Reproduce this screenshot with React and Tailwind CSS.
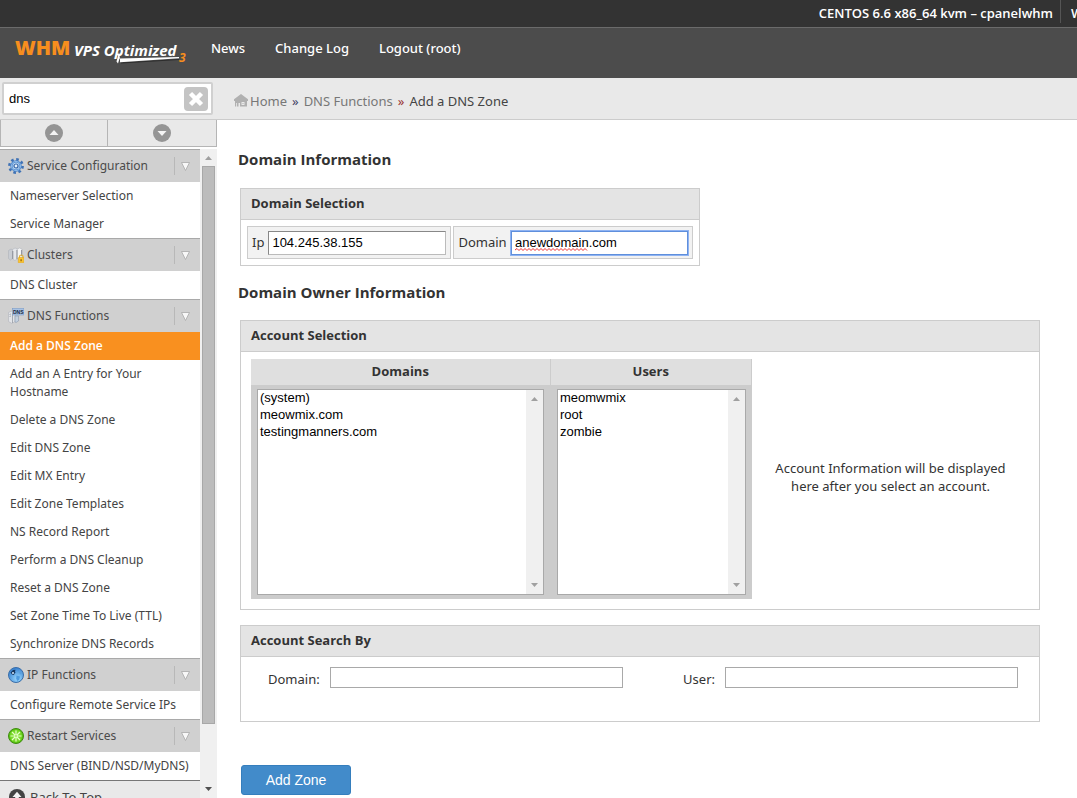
import React from "react";

const SANS = "font-['Noto_Sans','Open_Sans',sans-serif]";
const HEADING = "font-['Open_Sans','Noto_Sans',sans-serif] font-bold";

function GearIcon() {
  return (
    <svg viewBox="0 0 16 16" className="size-4 shrink-0" aria-hidden="true">
      <circle cx="8" cy="8" r="6.6" fill="none" stroke="#3f72b5" strokeWidth="2.6" strokeDasharray="2.600 2.580" />
      <circle cx="8" cy="8" r="4.600" fill="#b9d8f5" stroke="#4a83c8" strokeWidth="2.200" />
      <circle cx="8" cy="8" r="4.600" fill="none" stroke="#9cc6f0" strokeWidth=".8" />
      <circle cx="8" cy="8" r="2" fill="#e8f2fc" stroke="#3a68a8" strokeWidth="1.200" />
    </svg>
  );
}

function ClusterIcon() {
  return (
    <svg viewBox="0 0 16 16" className="size-4 shrink-0" aria-hidden="true">
      <path d="M.5 3.500 3 2l2 1v8l-2.500 2-2-1.500z" fill="#c9cdd3" stroke="#a8adb5" strokeWidth=".5" />
      <path d="M4.500 2.500 7 1l2.500 1v9.500L7 13.500 4.500 12z" fill="#e4e6ea" stroke="#a8adb5" strokeWidth=".5" />
      <path d="M9 2.500 11.500 1 14 2v9l-2.500 2L9 11.500z" fill="#f4f5f6" stroke="#a8adb5" strokeWidth=".5" />
      <path d="M4.800 4v8M9 3v9M13.600 3v6" stroke="#81868f" strokeWidth=".9" />
      <path d="M11.500 11V9.800a1.800 1.800 0 0 1 3.600 0V11" fill="none" stroke="#e0b23c" strokeWidth="1.200" />
      <rect x="10.300" y="10.500" width="5.500" height="5.300" rx=".6" fill="#fbc52f" stroke="#e0a51c" strokeWidth=".6" />
      <path d="M13.100 12.300v2" stroke="#8a5a0c" strokeWidth="1.200" />
    </svg>
  );
}

function DnsIcon() {
  return (
    <svg viewBox="0 0 16 16" className="size-4 shrink-0" aria-hidden="true">
      <path d="M.5 4.500 4 3l3 1v9.500L4 15.500.5 13.500z" fill="#e2e4e8" stroke="#a8adb5" strokeWidth=".5" />
      <path d="M4.500 5v10M1.500 6.500 3 6M1.500 8.500 3 8" stroke="#8d929b" strokeWidth=".7" />
      <path d="M7 8h3.500v5L8 14.500 7 14z" fill="#c3d0df" stroke="#8b9bb0" strokeWidth=".6" />
      <rect x="4.500" y=".5" width="11.500" height="6.500" fill="#a9c3e4" stroke="#7a9bc8" strokeWidth=".6" />
      <text x="5" y="5.600" fontSize="5" fontWeight="700" fill="#15233c" fontFamily="Liberation Sans, sans-serif">DNS</text>
    </svg>
  );
}

function GlobeIcon() {
  return (
    <svg viewBox="0 0 16 16" className="size-4 shrink-0" aria-hidden="true">
      <defs>
        <radialGradient id="globe" cx=".6" cy=".75" r=".8">
          <stop offset="0" stopColor="#9ad8ff" />
          <stop offset="1" stopColor="#2f79cb" />
        </radialGradient>
      </defs>
      <circle cx="8" cy="8" r="7.500" fill="url(#globe)" stroke="#3b6ea8" strokeWidth="1" />
      <path d="M2.500 5.500 5 3l2.500-.3L7 4.500l.5 1.200-1 .8L6 8 4 7.500z" fill="#17365f" />
      <path d="m8.500 8.500 3.500 1-.8 3.200-2 1.300-1-2.500z" fill="#4f9ade" />
      <path d="m11 3 3 2.500-1 2-2-1.500z" fill="#5a9fdd" />
      <circle cx="5" cy="6" r="1" fill="#d7ecff" />
    </svg>
  );
}

function RestartIcon() {
  return (
    <svg viewBox="0 0 16 16" className="size-4 shrink-0" aria-hidden="true">
      <circle cx="8" cy="8" r="7.500" fill="#5cc714" stroke="#3f8a12" strokeWidth="1" />
      <circle cx="8" cy="8" r="6" fill="#79d92a" />
      <path d="M8 2.500v11M2.500 8h11M4 4l8 8M12 4l-8 8" stroke="#e6ffc9" strokeWidth="1.200" />
      <circle cx="8" cy="8" r="1.400" fill="#8be03f" stroke="#e6ffc9" strokeWidth=".8" />
    </svg>
  );
}

function HomeIcon() {
  return (
    <svg viewBox="0 0 14 13" className="h-[13px] w-3.5 shrink-0" aria-hidden="true">
      <path d="M7 0 14 5.200V7h-1v5.500H6V9H4.500v3.500H3V9H2.200v3.500H1V7H0V5.200z" fill="#b0b0b0" />
      <path d="M7.500 8h3v3h-3z" fill="#e9e9e9" />
      <path d="M8.500 9h1v1h-1z" fill="#b0b0b0" />
    </svg>
  );
}

function Round({ down, className, fill }) {
  return (
    <svg viewBox="0 0 18 18" className={className} aria-hidden="true">
      <circle cx="9" cy="9" r="9" fill={fill} />
      <path d={down ? "M4.500 7h9L9 12z" : "M4.500 11h9L9 6z"} fill="#f4f4f4" />
    </svg>
  );
}

function BackToTopIcon() {
  return (
    <svg viewBox="0 0 16 16" className="size-4 shrink-0" aria-hidden="true">
      <circle cx="8" cy="8" r="8" fill="#444" />
      <path d="M8 2.800 12.500 8H9.800v4.500H6.200V8H3.500z" fill="#f4f4f4" />
    </svg>
  );
}

function Logo() {
  return (
    <svg viewBox="0 0 175 36" className="h-9 w-[175px]" role="img" aria-label="WHM VPS Optimized 3">
      <g fontFamily="Open Sans, Noto Sans, sans-serif">
        <text x="0" y="21" fontSize="20" fontWeight="800" fill="#f78e1e">WHM</text>
        <text x="59" y="22" fontSize="15" fontWeight="700" fontStyle="italic" fill="#fff">VPS Optimized</text>
        <text x="164" y="28" fontSize="12" fontWeight="700" fontStyle="italic" fill="#f78e1e">3</text>
      </g>
      <path d="M106 29 164 25.500" stroke="#2c2c2c" strokeWidth="1" />
      <path d="M104 18 101.500 27.500 103 29.500 104.500 24.500 164 23v1.200L105 28.200V25z" fill="#fff" />
    </svg>
  );
}

const groups = [
  { title: "Service Configuration", Icon: GearIcon, items: ["Nameserver Selection", "Service Manager"] },
  { title: "Clusters", Icon: ClusterIcon, items: ["DNS Cluster"] },
  {
    title: "DNS Functions",
    Icon: DnsIcon,
    items: [
      "Add a DNS Zone",
      "Add an A Entry for Your Hostname",
      "Delete a DNS Zone",
      "Edit DNS Zone",
      "Edit MX Entry",
      "Edit Zone Templates",
      "NS Record Report",
      "Perform a DNS Cleanup",
      "Reset a DNS Zone",
      "Set Zone Time To Live (TTL)",
      "Synchronize DNS Records",
    ],
  },
  { title: "IP Functions", Icon: GlobeIcon, items: ["Configure Remote Service IPs"] },
  { title: "Restart Services", Icon: RestartIcon, items: ["DNS Server (BIND/NSD/MyDNS)"] },
];

function NavGroup({ title, Icon, items }) {
  return (
    <section>
      <h2 className="flex h-[33px] items-center border-t border-[#a9a9a9] bg-[#d0d0d0] pl-2 text-[#4b4b4b]">
        <Icon />
        <span className="flex-1 pl-[3px]">{title}</span>
        <button type="button" aria-label={`Collapse ${title}`} className="flex h-[18px] w-[26px] items-center border-l border-[#b8b8b8] pl-1.5">
          <svg viewBox="0 0 9 9" className="size-[9px]" aria-hidden="true">
            <path d="M.5.5h8l-4 8z" fill="#f7f7f7" stroke="#a8a8a8" strokeWidth=".8" />
          </svg>
        </button>
      </h2>
      <ul>
        {items.map((item) => (
          <li key={item}>
            <a
              href="#"
              className={
                item === "Add a DNS Zone"
                  ? "block bg-[#f9901f] py-[5px] pr-2 pl-2.5 font-['Open_Sans','Noto_Sans',sans-serif] font-semibold text-white"
                  : "block py-[5px] pr-2 pl-2.5"
              }
            >
              {item}
            </a>
          </li>
        ))}
      </ul>
    </section>
  );
}

function Arrow({ down, dark }) {
  return (
    <svg viewBox="0 0 7 4" className="h-1 w-[7px]" aria-hidden="true">
      <path d={down ? "M0 0h7L3.500 4z" : "M0 4h7L3.500 0z"} fill={dark ? "#505050" : "#a0a0a0"} />
    </svg>
  );
}

function Panel({ title, className, children }) {
  return (
    <section className={`border border-[#ccc] ${className}`}>
      <h3 className={`flex h-[31px] items-center border-b border-[#ccc] bg-[#e4e4e4] pb-0.5 pl-2.5 text-[#333] ${HEADING}`}>{title}</h3>
      {children}
    </section>
  );
}

function ListBox({ label, options }) {
  return (
    <div className="flex h-[206px] border border-[#a9a9a9] bg-white">
      <select
        size={3}
        aria-label={label}
        className="min-w-0 flex-1 appearance-none overflow-hidden bg-white font-['Liberation_Sans',Arial,sans-serif] text-[13px] text-black outline-none"
      >
        {options.map((o) => (
          <option key={o} className="h-[17px] min-h-0 px-0.5 py-0 leading-[17px]">
            {o}
          </option>
        ))}
      </select>
      <div className="flex w-[17px] flex-col items-center justify-between bg-[#f0f0f0] py-[7px]">
        <Arrow />
        <Arrow down />
      </div>
    </div>
  );
}

const INPUT = "bg-white font-['Liberation_Sans',Arial,sans-serif] text-[13px] text-black outline-none";

export default function App() {
  return (
    <div className={`flex h-screen flex-col overflow-hidden bg-white text-[13px] leading-[18px] text-[#333] ${SANS}`}>
      <div className="flex h-[27px] shrink-0 justify-end overflow-hidden bg-[#333] font-['Open_Sans','Noto_Sans',sans-serif] font-semibold text-white">
        <span className="mr-[7px] whitespace-nowrap pt-1">CENTOS 6.6 x86_64 kvm – cpanelwhm</span>
        <span className="h-[23px] w-[17px] overflow-hidden border-l border-[#555] pl-2.5 pt-1">W</span>
      </div>
      <header className="flex h-[51px] shrink-0 items-start border-t border-[#6b6b6b] bg-[#4c4c4c] pl-[15px] pt-[6px] text-white">
        <Logo />
        <nav className="flex gap-[30px] pl-[21px] pt-[5px] font-medium">
          <a href="#">News</a>
          <a href="#">Change Log</a>
          <a href="#">Logout (root)</a>
        </nav>
      </header>

      <div className="flex min-h-0 flex-1">
        <aside className="flex w-[217px] shrink-0 flex-col">
          <div className="h-[42px] shrink-0 border-b border-[#ccc] bg-[#e9e9e9] px-0.5 pt-1">
            <div className="flex h-[33px] w-[211px] items-center rounded-xs border-2 border-[#d0d0d0] bg-white pl-[5px] pr-[3px]">
              <input aria-label="Find" defaultValue="dns" className={`min-w-0 flex-1 ${INPUT}`} />
              <button type="button" aria-label="Clear search">
                <svg viewBox="0 0 24 24" className="size-6" aria-hidden="true">
                  <rect width="24" height="24" rx="4" fill="#c4c4c4" />
                  <path d="m6.500 6.500 11 11M17.500 6.500l-11 11" stroke="#fff" strokeWidth="4.500" />
                </svg>
              </button>
            </div>
          </div>
          <div className="flex h-[27px] shrink-0 border-x border-b border-[#b5b5b5] bg-[#e9e9e9]">
            <button type="button" aria-label="Collapse all" className="flex w-[107px] items-center justify-center border-r border-[#b5b5b5]">
              <Round className="size-[18px]" fill="#959595" />
            </button>
            <button type="button" aria-label="Expand all" className="flex flex-1 items-center justify-center">
              <Round down className="size-[18px]" fill="#959595" />
            </button>
          </div>
          <div className="mt-0.5 flex min-h-0 flex-1">
            <nav className="min-w-0 flex-1 overflow-hidden text-[12px] text-[#444]">
              {groups.map((g) => (
                <NavGroup key={g.title} {...g} />
              ))}
              <a href="#" className="flex h-[33px] items-center border-t border-[#777] bg-[#e9e9e9] pl-[9px] text-[13px]">
                <BackToTopIcon />
                <span className="pl-[5px]">Back To Top</span>
              </a>
            </nav>
            <div className="flex w-[17px] flex-col items-center bg-[#f0f0f0] py-[7px]">
              <Arrow />
              <div className="mt-1.5 mb-[63px] w-[13px] flex-1 border border-[#a8a8a8] bg-[#bcbcbc]" />
              <Arrow down dark />
            </div>
          </div>
        </aside>

        <main className="min-w-0 flex-1">
          <nav aria-label="Breadcrumb" className="flex h-[42px] items-center border-b border-[#ccc] bg-[#e9e9e9] pl-[17px] pt-1 text-[#777]">
            <HomeIcon />
            <a href="#" className="pl-0.5">Home</a>
            <span className="px-[5px] text-[#446]">»</span>
            <a href="#">DNS Functions</a>
            <span className="px-[5px] text-[#933]">»</span>
            <span className="text-[#444]">Add a DNS Zone</span>
          </nav>

          <form className="pl-[21px] pr-[37px]" onSubmit={(e) => e.preventDefault()}>
            <h2 className={`pt-[30px] text-[15px] ${HEADING}`}>Domain Information</h2>
            <Panel title="Domain Selection" className="mt-5 ml-0.5 w-[460px]">
              <div className="flex gap-0.5 p-1.5">
                <label className="flex h-[33px] items-center border border-[#ccc] bg-[#f2f2f2] pl-1 pr-1">
                  <span className="pr-1 pb-0.5">Ip</span>
                  <input defaultValue="104.245.38.155" className={`h-6 w-[178px] border border-[#bbb] border-t-[#888] border-l-[#888] px-[3px] ${INPUT}`} />
                </label>
                <label className="flex h-[33px] flex-1 items-center border border-[#ccc] bg-[#f2f2f2] pl-1 pr-1">
                  <span className="flex-1 pb-0.5">Domain</span>
                  <span className="relative">
                    <input
                      defaultValue="anewdomain.com"
                      spellCheck={false}
                      className={`block h-6 w-[177px] border border-[#5f8fdc] px-[3px] ring-1 ring-[#8fb3f2] ${INPUT}`}
                    />
                    <svg viewBox="0 0 73 3" className="absolute top-[17px] left-1 h-[3px] w-[73px]" aria-hidden="true">
                      <path
                        d="M0 2 2 .5l2 2 2-2 2 2 2-2 2 2 2-2 2 2 2-2 2 2 2-2 2 2 2-2 2 2 2-2 2 2 2-2 2 2 2-2 2 2 2-2 2 2 2-2 2 2 2-2 2 2 2-2 2 2 2-2 2 2 2-2 2 2 2-2 2 2 2-2 2 2"
                        fill="none"
                        stroke="#e33"
                        strokeWidth="1"
                      />
                    </svg>
                  </span>
                </label>
              </div>
            </Panel>

            <h2 className={`mt-[17px] text-[15px] ${HEADING}`}>Domain Owner Information</h2>
            <Panel title="Account Selection" className="mt-[19px] ml-0.5">
              <div className="flex items-center pt-[7px] pr-2.5 pb-2.5 pl-2.5">
                <table className="w-[501px] shrink-0 table-fixed border-collapse bg-[#ccc]">
                  <thead>
                    <tr className="h-[26px] bg-[#dfdfdf]">
                      <th className={`w-[299px] border-r border-[#ccc] p-0 pb-0.5 ${HEADING}`}>Domains</th>
                      <th className={`border-r border-[#ccc] p-0 pb-0.5 ${HEADING}`}>Users</th>
                    </tr>
                  </thead>
                  <tbody>
                    <tr>
                      <td className="px-1.5 py-1">
                        <ListBox label="Domains" options={["(system)", "meowmix.com", "testingmanners.com"]} />
                      </td>
                      <td className="py-1 pr-1.5 pl-[7px]">
                        <ListBox label="Users" options={["meomwmix", "root", "zombie"]} />
                      </td>
                    </tr>
                  </tbody>
                </table>
                <p className="flex-1 px-2.5 pb-1 text-center">
                  Account Information will be displayed here after you select an account.
                </p>
              </div>
            </Panel>

            <Panel title="Account Search By" className="mt-[15px] ml-0.5">
              <div className="flex h-[64px] items-start justify-between pt-2.5 pr-[21px] pl-[27px]">
                <label className="flex items-center gap-2.5">
                  <span className="pt-0.5">Domain:</span>
                  <input className={`h-[21px] w-[293px] border border-[#a9a9a9] px-1 ${INPUT}`} />
                </label>
                <label className="flex items-center gap-2.5">
                  <span className="pt-0.5">User:</span>
                  <input className={`h-[21px] w-[293px] border border-[#a9a9a9] px-1 ${INPUT}`} />
                </label>
              </div>
            </Panel>

            <button
              type="submit"
              className="mt-[43px] ml-[3px] h-[30px] w-[110px] rounded-[3px] border border-[#357ebd] bg-[#428bca] font-['Liberation_Sans',Arial,sans-serif] text-[14px] text-white"
            >
              Add Zone
            </button>
          </form>
        </main>
      </div>
    </div>
  );
}
